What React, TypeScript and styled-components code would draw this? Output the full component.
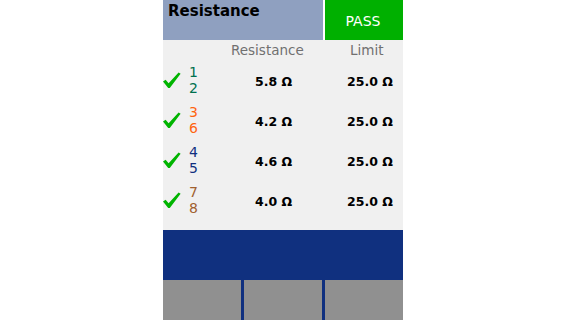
import React from "react";
import styled, { createGlobalStyle } from "styled-components";

const Global = createGlobalStyle`
  html, body { margin: 0; padding: 0; background: #ffffff; }
  body { font-family: "DejaVu Sans", Verdana, sans-serif; }
  #root { display: flex; justify-content: center; width: 565px; height: 320px; }
`;

const Screen = styled.div`
  width: 240px;
  height: 320px;
  display: flex;
  flex-direction: column;
  background: #f0f0f0;
  margin-left: 1px;
`;

const Header = styled.div`
  height: 40px;
  display: flex;
  background: #ffffff;
  gap: 2px;
`;

const Title = styled.div`
  width: 160px;
  background: #8fa0c0;
  color: #000000;
  font-weight: bold;
  font-size: 15px;
  line-height: 18px;
  padding: 2px 0 0 5px;
  box-sizing: border-box;
`;

const Status = styled.div`
  flex: 1;
  background: #00b000;
  color: #ffffff;
  font-size: 14px;
  line-height: 14px;
  display: flex;
  align-items: center;
  justify-content: center;
  padding-top: 2px;
  padding-right: 2px;
  box-sizing: border-box;
`;

const Table = styled.div`
  height: 190px;
  display: flex;
  flex-direction: column;
`;

const Grid = styled.div`
  display: grid;
  grid-template-columns: 26px 36px 110px 68px;
`;

const HeadRow = styled(Grid)`
  height: 20px;
`;

const HeadCell = styled.div<{ $pad: number }>`
  grid-column: ${(p) => (p.$pad > 10 ? 4 : 3)};
  padding-left: ${(p) => p.$pad}px;
  color: #707070;
  font-size: 13.5px;
  line-height: 20px;
  white-space: nowrap;
`;

const Row = styled(Grid)`
  height: 40px;
`;

const CheckCell = styled.div`
  padding-top: 12px;
`;

const Pair = styled.div<{ $color: string }>`
  padding: 4px 0 0 0;
  color: ${(p) => p.$color};
  font-size: 14px;
  line-height: 16px;
  display: flex;
  flex-direction: column;
`;

const Value = styled.div<{ $pad: number }>`
  padding: 14px 0 0 ${(p) => p.$pad}px;
  color: #000000;
  font-weight: bold;
  font-size: 12.5px;
  line-height: 16px;
  white-space: nowrap;
`;

const BlueBar = styled.div`
  height: 50px;
  background: #10307f;
`;

const Keys = styled.div`
  height: 40px;
  display: flex;
  gap: 3px;
  background: #10307f;
`;

const Key = styled.div`
  flex: 1;
  background: #909090;
`;

const Check = () => (
  <svg width="18" height="17" viewBox="0 0 18 17">
    <polygon
      points="0,9.5 2.6,7.8 5.6,11.2 15.6,0.6 17.6,1.8 6.8,16 5.2,16"
      fill="#00b400"
    />
  </svg>
);

const rows = [
  { a: "1", b: "2", color: "#00704f", value: "5.8" },
  { a: "3", b: "6", color: "#ff6410", value: "4.2" },
  { a: "4", b: "5", color: "#10307f", value: "4.6" },
  { a: "7", b: "8", color: "#a0602f", value: "4.0" },
];

export default function App() {
  return (
    <>
      <Global />
      <Screen>
        <Header>
          <Title>Resistance</Title>
          <Status>PASS</Status>
        </Header>
        <Table>
          <HeadRow>
            <HeadCell $pad={6}>Resistance</HeadCell>
            <HeadCell $pad={15}>Limit</HeadCell>
          </HeadRow>
          {rows.map((r) => (
            <Row key={r.a}>
              <CheckCell>
                <Check />
              </CheckCell>
              <Pair $color={r.color}>
                <span>{r.a}</span>
                <span>{r.b}</span>
              </Pair>
              <Value $pad={30}>{r.value} Ω</Value>
              <Value $pad={12}>25.0 Ω</Value>
            </Row>
          ))}
        </Table>
        <BlueBar />
        <Keys>
          <Key />
          <Key />
          <Key />
        </Keys>
      </Screen>
    </>
  );
}
